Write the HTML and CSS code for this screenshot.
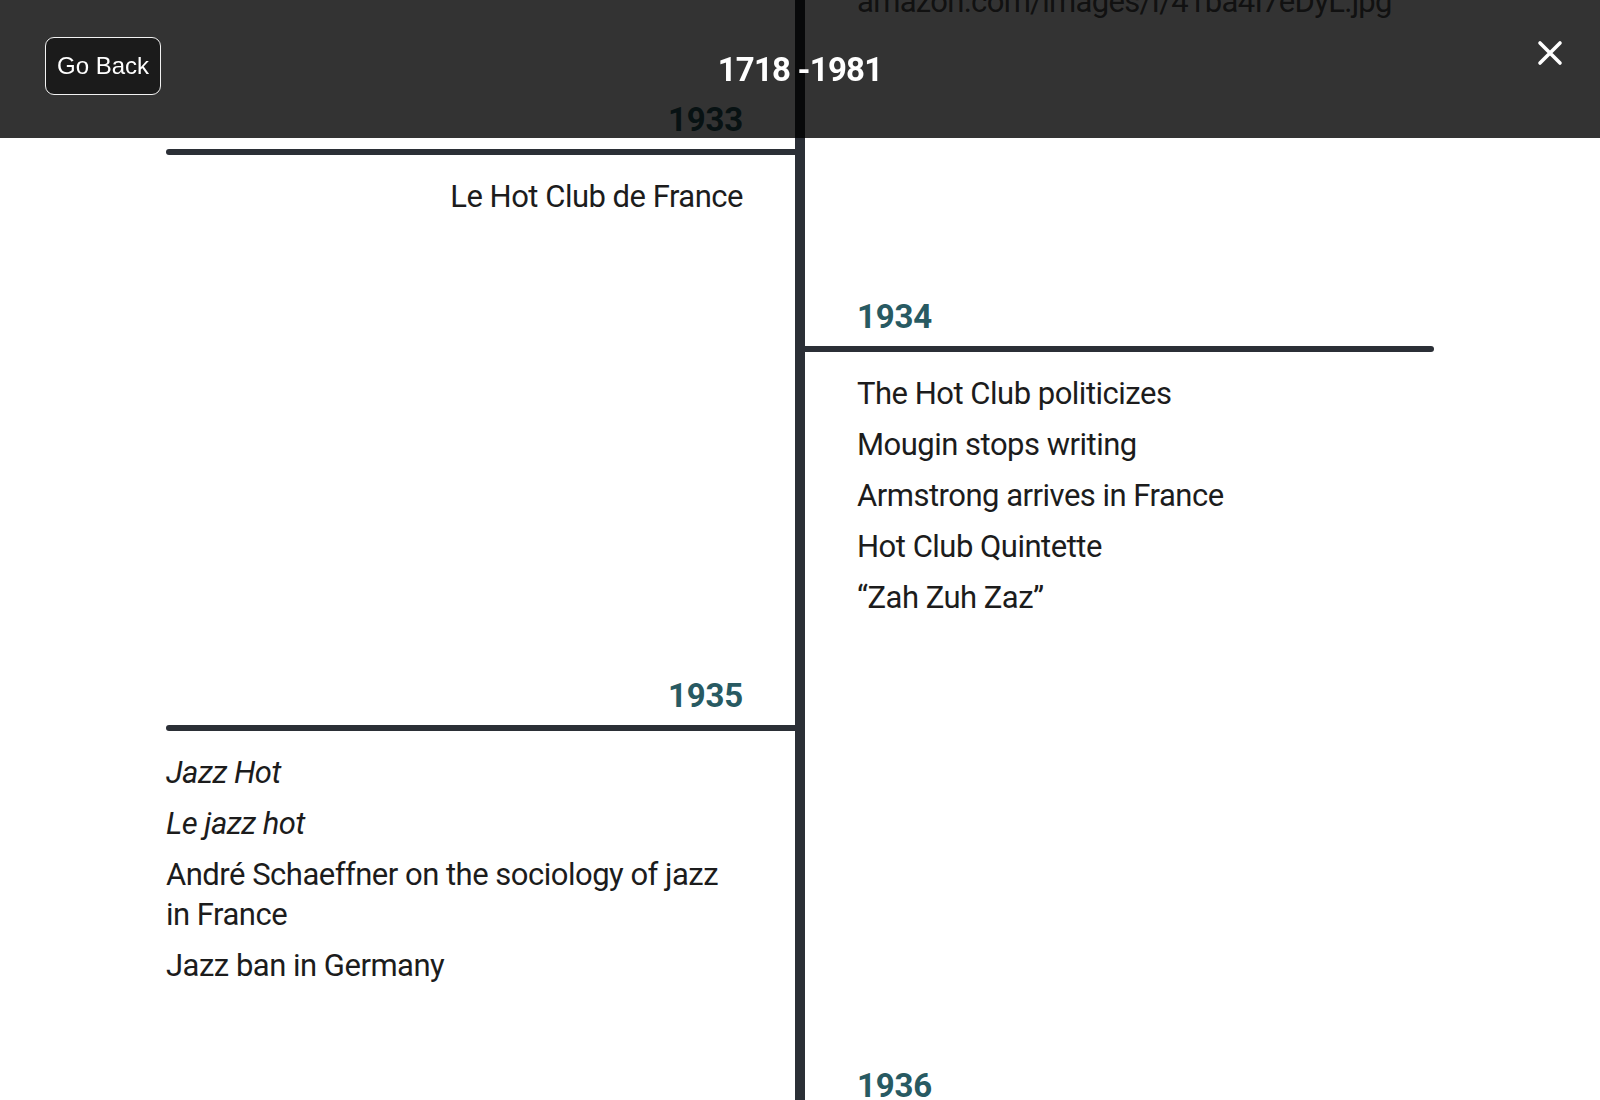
FILE: index.html
```html
<!DOCTYPE html>
<html lang="en">
<head>
<meta charset="utf-8">
<title>1718 - 1981 Timeline</title>
<link rel="stylesheet" href="styles.css">
</head>
<body>
<header class="topbar">
  <div class="topbar-left"><button class="back-btn" type="button">Go Back</button></div>
  <h1 class="range">1718 -1981</h1>
  <div class="topbar-right">
    <button class="close-btn" type="button" aria-label="Close">
      <svg width="26" height="26" viewBox="0 0 26 26"><path d="M3 3L23 23M23 3L3 23" stroke="#fff" stroke-width="3.6" stroke-linecap="round" fill="none"/></svg>
    </button>
  </div>
</header>
<main class="timeline">
  <div class="entry entry-right lead">
    <p class="alt-text">amazon.com/images/I/41ba4I7eDyL.jpg</p>
  </div>
  <section class="entry entry-left gap-a">
    <h2 class="year">1933</h2>
    <div class="rule"></div>
    <ul class="items items-end">
      <li>Le Hot Club de France</li>
    </ul>
  </section>
  <section class="entry entry-right gap-b">
    <h2 class="year">1934</h2>
    <div class="rule"></div>
    <ul class="items">
      <li>The Hot Club politicizes</li>
      <li>Mougin stops writing</li>
      <li>Armstrong arrives in France</li>
      <li>Hot Club Quintette</li>
      <li>“Zah Zuh Zaz”</li>
    </ul>
  </section>
  <section class="entry entry-left gap-c">
    <h2 class="year">1935</h2>
    <div class="rule"></div>
    <ul class="items">
      <li><em>Jazz Hot</em></li>
      <li><em>Le jazz hot</em></li>
      <li>André Schaeffner on the sociology of jazz in France</li>
      <li>Jazz ban in Germany</li>
    </ul>
  </section>
  <section class="entry entry-right gap-b">
    <h2 class="year">1936</h2>
    <div class="rule"></div>
  </section>
</main>
</body>
</html>
```
FILE: styles.css
```css
html, body {
  margin: 0;
  padding: 0;
  height: 100%;
  overflow: hidden;
  background: #fff;
}

body {
  font-family: Roboto, "Liberation Sans", Arial, sans-serif;
  color: #1c1c1c;
}

/* ---------- top overlay bar ---------- */
.topbar {
  position: fixed;
  top: 0;
  left: 0;
  right: 0;
  height: 138px;
  box-sizing: border-box;
  padding: 37px 38px 0;
  background: rgba(0, 0, 0, 0.8);
  display: grid;
  grid-template-columns: 1fr auto 1fr;
  align-items: start;
  z-index: 10;
}

.topbar-left {
  justify-self: start;
}

.back-btn {
  margin-left: 7px;
  height: 58px;
  width: 116px;
  padding: 0;
  box-sizing: border-box;
  background: #1b1b1b;
  color: #fff;
  border: 1.5px solid #f2f2f2;
  border-radius: 9px;
  font-family: "Liberation Sans", Arial, sans-serif;
  font-size: 24px;
  line-height: 1;
  cursor: pointer;
}

.range {
  margin: 13px 0 0;
  font-family: Roboto, "Liberation Sans", sans-serif;
  font-weight: 700;
  font-size: 33px;
  line-height: 40px;
  color: #fff;
  letter-spacing: -0.8px;
}

.topbar-right {
  justify-self: end;
}

.close-btn {
  display: block;
  margin-top: 3px;
  margin-right: -1px;
  padding: 0;
  border: 0;
  background: transparent;
  cursor: pointer;
}

.close-btn svg {
  display: block;
}

/* ---------- timeline ---------- */
.timeline {
  display: flow-root;
  min-height: calc(100vh + 60px);
  background: linear-gradient(90deg,
    transparent calc(50% - 5px),
    #2b2f36 calc(50% - 5px),
    #2b2f36 calc(50% + 5px),
    transparent calc(50% + 5px));
}

.entry {
  box-sizing: border-box;
  width: calc(50% - 171px);
}

.entry-left {
  margin-left: 166px;
}

.entry-right {
  margin-left: calc(50% + 5px);
}

.lead {
  margin-top: -18px;
}

.alt-text {
  margin: 0;
  padding-left: 52px;
  font-size: 31px;
  line-height: 40px;
  letter-spacing: -0.7px;
  color: #555;
  white-space: nowrap;
}

.gap-a { margin-top: 78px; }
.gap-b { margin-top: 80px; }
.gap-c { margin-top: 58px; }

.year {
  margin: 0 0 9px;
  font-size: 33px;
  line-height: 40px;
  font-weight: 700;
  color: #285a62;
  letter-spacing: -0.2px;
}

.entry-left .year {
  text-align: right;
  padding-right: 52px;
}

.entry-right .year {
  padding-left: 52px;
}

.rule {
  height: 6px;
  background: #2b2f36;
}

.entry-left .rule {
  border-radius: 3px 0 0 3px;
}

.entry-right .rule {
  border-radius: 0 3px 3px 0;
}

.items {
  list-style: none;
  margin: 0;
  padding: 11px 0 0;
  font-size: 31px;
  line-height: 40px;
  letter-spacing: -0.5px;
}

.items li {
  margin-top: 11px;
}

.entry-left .items {
  padding-right: 52px;
}

.entry-right .items {
  padding-left: 52px;
}

.items-end {
  text-align: right;
}

.items em {
  font-style: italic;
}
```
